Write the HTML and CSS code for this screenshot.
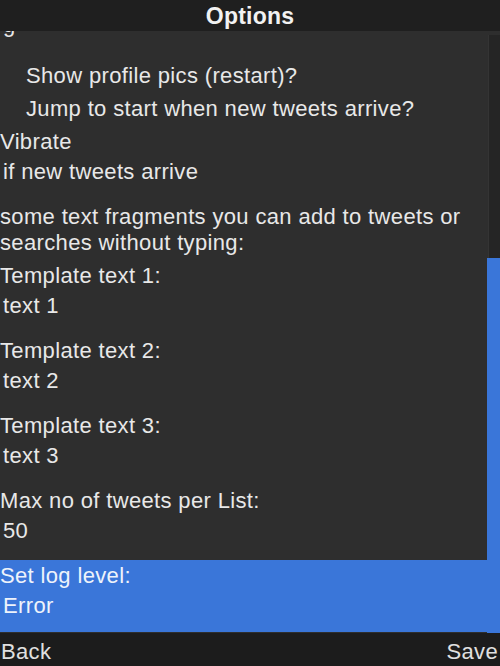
FILE: index.html
```html
<!DOCTYPE html>
<html>
<head>
<meta charset="utf-8">
<title>Options</title>
<link rel="stylesheet" href="styles.css">
</head>
<body>
<div class="screen">
  <header class="titlebar">Options</header>
  <main class="form">
    <div class="list">
      <div class="line value cut">g</div>
      <div class="check check-first">Show profile pics (restart)?</div>
      <div class="check">Jump to start when new tweets arrive?</div>
      <div class="line group-label">Vibrate</div>
      <div class="line value">if new tweets arrive</div>
      <p class="note">some text fragments you can add to tweets or searches without typing:</p>
      <div class="item item-first">
        <div class="label">Template text 1:</div>
        <div class="line value">text 1</div>
      </div>
      <div class="item">
        <div class="label">Template text 2:</div>
        <div class="line value">text 2</div>
      </div>
      <div class="item">
        <div class="label">Template text 3:</div>
        <div class="line value">text 3</div>
      </div>
      <div class="item">
        <div class="label">Max no of tweets per List:</div>
        <div class="line value">50</div>
      </div>
      <div class="item selected">
        <div class="label">Set log level:</div>
        <div class="line value">Error</div>
      </div>
    </div>
    <div class="scrollbar"><div class="thumb"></div></div>
  </main>
  <footer class="softkeys">
    <span class="softkey">Back</span>
    <span class="softkey">Save</span>
  </footer>
</div>
</body>
</html>
```
FILE: styles.css
```css
html, body {
  margin: 0;
  padding: 0;
  background: #2e2e2e;
}

.screen {
  width: 500px;
  height: 666px;
  display: flex;
  flex-direction: column;
  background: #2e2e2e;
  font-family: "Liberation Sans", Arial, sans-serif;
  font-size: 22px;
  letter-spacing: 0.35px;
  color: #e8e8e8;
  overflow: hidden;
}

.titlebar {
  position: relative;
  z-index: 2;
  height: 31px;
  box-sizing: border-box;
  padding-top: 2px;
  line-height: 29px;
  background: #1f1f1f;
  text-align: center;
  font-weight: bold;
  font-size: 23px;
  letter-spacing: 0.2px;
  color: #f2f2f2;
}

.form {
  flex: 1;
  position: relative;
  overflow: hidden;
  background: #2e2e2e;
}

.list {
  display: flex;
  flex-direction: column;
}

.line {
  line-height: 30px;
  white-space: nowrap;
}

.value {
  padding-left: 3px;
}

.cut {
  margin-top: -21px;
}

.check {
  line-height: 33px;
  padding-left: 26px;
  white-space: nowrap;
}

.check-first {
  margin-top: 19px;
}

.group-label {
  margin-top: 2px;
  padding-left: 0;
}

.note {
  margin: 17px 0 0 0;
  line-height: 26px;
  max-width: 487px;
}

.item {
  height: 72px;
  margin-bottom: 3px;
}

.item-first {
  margin-top: 4px;
}

.label {
  line-height: 31px;
  white-space: nowrap;
}

.selected {
  background: #3a76d9;
  color: #eef3fb;
}

.scrollbar {
  position: absolute;
  top: 4px;
  right: 0;
  bottom: 0;
  width: 11px;
  background: #252525;
  border-left: 1px solid #343434;
}

.thumb {
  position: absolute;
  top: 223px;
  left: -2px;
  right: 0;
  bottom: 0;
  background: #3a76d9;
}

.softkeys {
  height: 33px;
  box-sizing: border-box;
  padding: 4px 2px 0 1px;
  line-height: 29px;
  display: flex;
  justify-content: space-between;
  background: #1c1c1c;
  color: #e0e0e0;
}
```
